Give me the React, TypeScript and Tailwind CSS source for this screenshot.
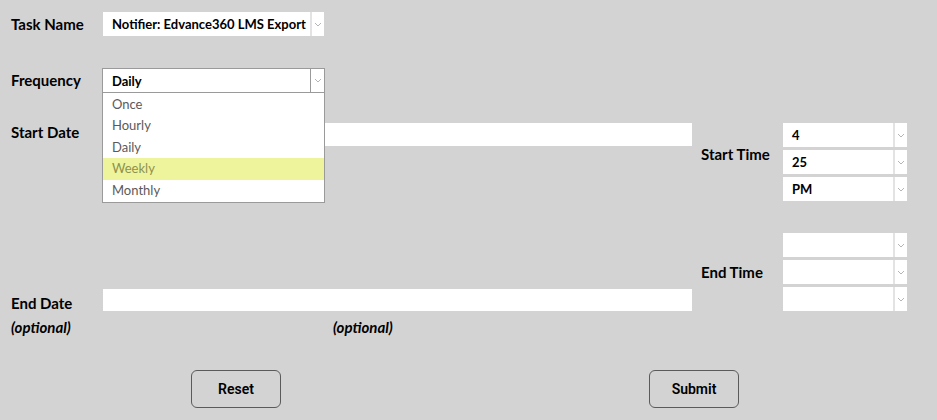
import React from "react";

function Chevron() {
  return (
    <svg width="8" height="5" viewBox="0 0 8 5" className="text-[#b5b5b5]">
      <path d="M1 1l3 3 3-3" fill="none" stroke="currentColor" strokeWidth="1" />
    </svg>
  );
}

function Select({ value, w = "w-[124px]", h = "h-[24px]" }: { value?: string; w?: string; h?: string }) {
  return (
    <div className={`flex ${w} ${h} bg-white`}>
      <div className="flex-1 flex items-center pl-[9px] pt-[1px] text-[13px] font-bold text-black truncate">{value}</div>
      <div className="w-[14px] flex items-center justify-center border-l-2 border-[#e3e3e3]">
        <Chevron />
      </div>
    </div>
  );
}

export default function App() {
  const options = ["Once", "Hourly", "Daily", "Weekly", "Monthly"];

  return (
    <div className="w-[937px] h-[420px] bg-[#d3d3d3] pl-[11px] pt-[12px] text-black" style={{ fontFamily: "Lato, 'Noto Sans', sans-serif" }}>
      <div className="flex items-center h-[24px]">
        <div className="w-[92px] text-[15px] font-bold">Task Name</div>
        <Select value="Notifier: Edvance360 LMS Export" w="w-[221px]" />
      </div>

      <div className="relative flex items-center h-[25px] mt-[32px]">
        <div className="w-[91px] text-[15px] font-bold">Frequency</div>
        <div className="flex w-[223px] h-[25px] bg-white border border-[#9a9a9a]">
          <div className="flex-1 flex items-center pl-[9px] pt-[2px] text-[13px] font-bold">Daily</div>
          <div className="w-[14px] flex items-center justify-center border-l border-[#9a9a9a]">
            <Chevron />
          </div>
        </div>
        <ul className="absolute left-[91px] top-[25px] z-10 w-[223px] bg-white border border-[#9a9a9a] border-t-0 py-[1px]">
          {options.map((o) => (
            <li
              key={o}
              className={`h-[21.4px] flex items-center pl-[9px] text-[13px] ${o === "Weekly" ? "bg-[#eef49b] text-[#8e914e]" : "text-[#5a5a5a]"}`}
            >
              {o}
            </li>
          ))}
        </ul>
      </div>

      <div className="flex items-start mt-[30px]">
        <div className="flex items-start">
          <div className="w-[92px] text-[15px] leading-[18px] font-bold">Start Date</div>
          <div className="w-[589px] h-[23px] bg-white" />
        </div>
        <div className="flex items-center ml-[9px]">
          <div className="w-[82px] text-[15px] font-bold mb-[15px]">Start Time</div>
          <div className="flex flex-col gap-[3px]">
            <Select value="4" />
            <Select value="25" />
            <Select value="PM" />
          </div>
        </div>
      </div>

      <div className="flex items-end mt-[32px]">
        <div className="flex items-end">
          <div className="w-[92px] text-[15px] leading-[16px] font-bold">End Date</div>
          <div className="w-[589px] h-[22px] bg-white" />
        </div>
        <div className="flex items-center ml-[9px]">
          <div className="w-[82px] text-[15px] font-bold">End Time</div>
          <div className="flex flex-col gap-[3px]">
            <Select />
            <Select />
            <Select />
          </div>
        </div>
      </div>

      <div className="flex h-[32px] items-center text-[15px] font-bold italic">
        <div className="w-[322px]">(optional)</div>
        <div>(optional)</div>
      </div>

      <div className="flex mt-[27px]">
        <button
          className="ml-[180px] w-[90px] h-[38px] rounded-[6px] border border-[#5a5a5a] text-[14px] font-semibold"
          style={{ fontFamily: "'Liberation Sans Narrow', 'Roboto', sans-serif" }}
        >
          Reset
        </button>
        <button
          className="ml-[368px] w-[90px] h-[38px] rounded-[6px] border border-[#5a5a5a] text-[14px] font-semibold"
          style={{ fontFamily: "'Liberation Sans Narrow', 'Roboto', sans-serif" }}
        >
          Submit
        </button>
      </div>
    </div>
  );
}
